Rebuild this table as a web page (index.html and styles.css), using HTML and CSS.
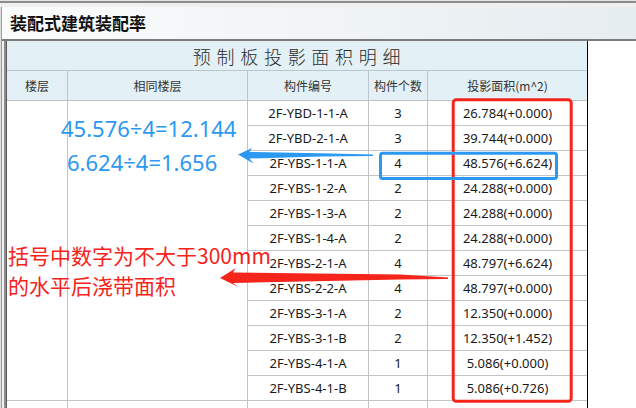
FILE: index.html
```html
<!DOCTYPE html>
<html lang="zh-CN">
<head>
<meta charset="utf-8">
<title>装配式建筑装配率</title>
<link rel="stylesheet" href="styles.css">
</head>
<body>
<div class="app">
  <div class="topstrip"></div>
  <div class="shell">
    <div class="edge"></div>
    <div class="content">
      <div class="titlebar">装配式建筑装配率</div>
      <div class="work">
        <div class="gutter"></div>
        <div class="sheet">
          <div class="cell caption">预制板投影面积明细</div>
          <div class="cell head">楼层</div>
          <div class="cell head">相同楼层</div>
          <div class="cell head">构件编号</div>
          <div class="cell head">构件个数</div>
          <div class="cell head last">投影面积(m^2)</div>

          <div class="cell merged"></div>
          <div class="cell merged"></div>

          <div class="cell">2F-YBD-1-1-A</div><div class="cell">3</div><div class="cell last">26.784(+0.000)</div>
          <div class="cell">2F-YBD-2-1-A</div><div class="cell">3</div><div class="cell last">39.744(+0.000)</div>
          <div class="cell">2F-YBS-1-1-A</div><div class="cell">4</div><div class="cell last">48.576(+6.624)</div>
          <div class="cell">2F-YBS-1-2-A</div><div class="cell">2</div><div class="cell last">24.288(+0.000)</div>
          <div class="cell">2F-YBS-1-3-A</div><div class="cell">2</div><div class="cell last">24.288(+0.000)</div>
          <div class="cell">2F-YBS-1-4-A</div><div class="cell">2</div><div class="cell last">24.288(+0.000)</div>
          <div class="cell">2F-YBS-2-1-A</div><div class="cell">4</div><div class="cell last">48.797(+6.624)</div>
          <div class="cell">2F-YBS-2-2-A</div><div class="cell">4</div><div class="cell last">48.797(+0.000)</div>
          <div class="cell">2F-YBS-3-1-A</div><div class="cell">2</div><div class="cell last">12.350(+0.000)</div>
          <div class="cell">2F-YBS-3-1-B</div><div class="cell">2</div><div class="cell last">12.350(+1.452)</div>
          <div class="cell">2F-YBS-4-1-A</div><div class="cell">1</div><div class="cell last">5.086(+0.000)</div>
          <div class="cell">2F-YBS-4-1-B</div><div class="cell">1</div><div class="cell last">5.086(+0.726)</div>

          <div class="cell"></div><div class="cell"></div><div class="cell"></div><div class="cell"></div><div class="cell last"></div>
        </div>
      </div>
    </div>
  </div>

  <div class="note-blue">
    <div class="nb-line">45.576÷4=12.144</div>
    <div class="nb-line second">6.624÷4=1.656</div>
  </div>
  <div class="note-red">
    <div>括号中数字为不大于300mm</div>
    <div>的水平后浇带面积</div>
  </div>

  <svg class="marks" width="636" height="408" viewBox="0 0 636 408">
    <rect x="453.2" y="99.8" width="118" height="301.4" rx="3" fill="none" stroke="#f5251c" stroke-width="3"/>
    <rect x="380.5" y="153.2" width="176" height="25.3" rx="2" fill="none" stroke="#2b98f2" stroke-width="3"/>
    <path d="M238,154.5 L252,148 L249.5,152 L320,153.2 L373,154.4 L373,156 L320,156.6 L249.5,158.5 L253.5,163.5 Z" fill="#2b98f2"/>
    <path d="M220,278 L235.5,268.3 L233,272.5 L400,274.5 L448,277.4 L448,279 L400,279.6 L233,283 L238.5,287 Z" fill="#f5251c"/>
  </svg>
</div>
</body>
</html>
```
FILE: styles.css
```css
* { box-sizing: border-box; }
html, body { margin: 0; padding: 0; }
body { background: #ffffff; }

.app {
  position: relative;
  width: 636px;
  height: 408px;
  overflow: hidden;
  background: #ffffff;
  font-family: "Noto Sans", "Noto Sans CJK SC", sans-serif;
}

.topstrip {
  height: 7px;
  background: linear-gradient(#e4e4e4 0 1px, #8c8c8c 1px 3px, #efefef 3px);
}

.shell {
  display: flex;
  height: 401px;
}

.edge {
  width: 2px;
  flex: none;
  background: linear-gradient(90deg, #dedede 0 1px, #9a9a9a 1px 2px);
}

.content {
  flex: 1;
  display: flex;
  flex-direction: column;
  min-width: 0;
}

.titlebar {
  height: 34px;
  flex: none;
  display: flex;
  align-items: center;
  padding: 0 0 1px 8px;
  border-bottom: 2px solid #7c7c7c;
  background: linear-gradient(90deg, #fbfcfc, #e6edf0);
  font-family: "Noto Sans CJK SC", sans-serif;
  font-weight: 700;
  font-size: 17px;
  color: #111;
}

.work {
  flex: 1;
  display: flex;
  background: #fff;
  min-height: 0;
}

.gutter {
  width: 5px;
  flex: none;
  background: linear-gradient(90deg, #f0f0f0 0 2px, #8c8c8c 2px 4px, #5a5a5a 4px 5px);
}

.sheet {
  display: grid;
  grid-template-columns: 61px 180px 121px 59px 159px;
  grid-template-rows: 30px 30px repeat(13, 25px);
  width: 581px;
  border-right: 1px solid #000;
  align-self: flex-start;
  font-size: 13px;
  color: #1a1a1a;
}

.cell {
  display: flex;
  align-items: center;
  justify-content: center;
  border-right: 1px solid #c4c4c4;
  border-bottom: 1px solid #c4c4c4;
  white-space: nowrap;
}

.cell.last { border-right: none; }

.caption {
  grid-column: 1 / -1;
  background: #e3f1f7;
  border-right: none;
  border-bottom-color: #b9c6cc;
  font-family: "Noto Sans CJK SC", sans-serif;
  font-weight: 300;
  font-size: 18px;
  letter-spacing: 5.7px;
  padding-left: 5px;
  color: #2a2a2a;
}

.head {
  background: #e3f1f7;
  border-right-color: #b9c6cc;
  border-bottom-color: #c0c0c0;
  font-family: "Noto Sans CJK SC", sans-serif;
  font-size: 12px;
  color: #333;
}

.merged { grid-row: span 12; }

.note-blue {
  position: absolute;
  left: 61px;
  top: 117px;
  color: #2b98f2;
  font-family: "Noto Sans", sans-serif;
  font-size: 22px;
  line-height: 22px;
}

.nb-line.second {
  margin-top: 12px;
  padding-left: 6px;
}

.note-red {
  position: absolute;
  left: 8px;
  top: 240px;
  color: #f5231b;
  font-family: "Noto Sans CJK SC", sans-serif;
  font-size: 21px;
  line-height: 30px;
  white-space: nowrap;
}

.marks {
  position: absolute;
  left: 0;
  top: 0;
  pointer-events: none;
}
```
